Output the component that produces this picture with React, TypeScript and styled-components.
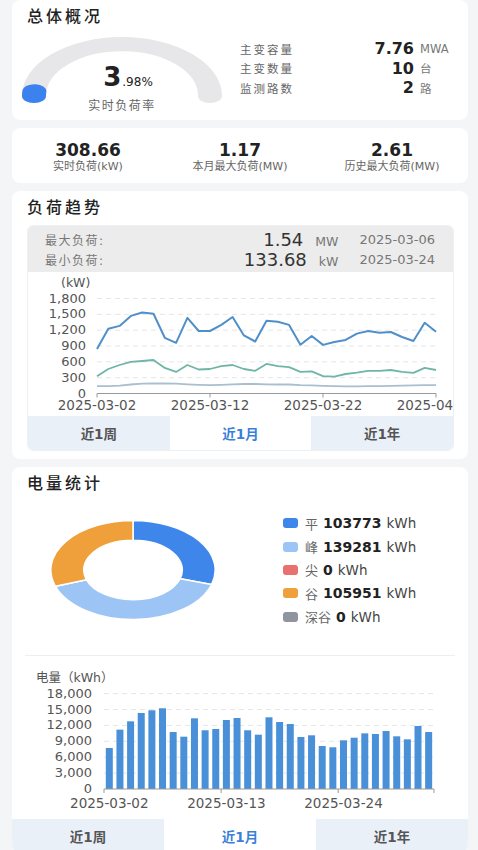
import React from 'react'
import styled, { createGlobalStyle } from 'styled-components'

const GlobalStyle = createGlobalStyle`
  body {
    margin: 0;
    background: #f4f5f7;
    font-family: 'DejaVu Sans', 'Noto Sans CJK SC', sans-serif;
    color: #222;
  }
`

const CJK = `'DejaVu Sans', 'Noto Sans CJK SC', sans-serif`

const loadTop = [845, 1225, 1280, 1470, 1535, 1510, 1055, 960, 1435, 1185, 1185, 1300, 1450, 1100, 985, 1380, 1360, 1300, 925, 1090, 920, 975, 1015, 1135, 1185, 1150, 1165, 1070, 995, 1340, 1170]
const loadMid = [325, 465, 540, 600, 615, 635, 485, 410, 540, 455, 465, 520, 540, 465, 430, 560, 520, 500, 410, 420, 330, 320, 370, 395, 430, 430, 445, 410, 390, 485, 445]
const loadLow = [140, 140, 150, 170, 185, 190, 190, 185, 175, 165, 160, 165, 175, 180, 180, 175, 170, 170, 160, 155, 145, 140, 135, 135, 140, 140, 145, 150, 155, 160, 160]

const energy = [7740, 11200, 12770, 14340, 14850, 15230, 10750, 9870, 13340, 11080, 11320, 13020, 13400, 11080, 10250, 13530, 12640, 12260, 9810, 10130, 8110, 7870, 9190, 9680, 10500, 10380, 10940, 9940, 9370, 11890, 10750]

const legend = [
  { name: '平', value: '103773', color: '#3f86ea', part: 103773 },
  { name: '峰', value: '139281', color: '#9cc5f5', part: 139281 },
  { name: '尖', value: '0', color: '#e8716f', part: 0 },
  { name: '谷', value: '105951', color: '#f0a03a', part: 105951 },
  { name: '深谷', value: '0', color: '#8e959f', part: 0 },
]

const Page = styled.div`
  padding: 0 10px 0 12px;
  display: flex;
  flex-direction: column;
  gap: 8px;
`

const Card = styled.section`
  background: #fff;
  border-radius: 8px;
  overflow: hidden;
`

const Title = styled.h2`
  margin: 0;
  padding: 6px 15px 0;
  height: 18px;
  line-height: 18px;
  font-family: 'Noto Sans CJK SC', sans-serif;
  font-size: 16px;
  font-weight: 500;
  letter-spacing: 3px;
  color: #222;
`

/* ---------- overview ---------- */

const GaugeRow = styled.div`
  display: flex;
  padding: 13px 0 17px 10px;
`

const GaugeWrap = styled.div`
  position: relative;
  width: 200px;
  height: 66px;
  flex: none;
`

const GaugeText = styled.div`
  position: absolute;
  left: 0;
  right: 0;
  top: 29px;
  text-align: center;
`

const GaugeValue = styled.div`
  line-height: 22px;
  font-size: 26px;
  font-weight: 700;
  color: #222;
  padding-left: 12px;
  small {
    font-size: 12px;
    font-weight: 400;
    margin-left: 1px;
  }
`

const GaugeLabel = styled.div`
  margin-top: 3px;
  font-family: ${CJK};
  font-size: 12px;
  letter-spacing: 1.5px;
  color: #666;
`

const InfoGrid = styled.div`
  flex: 1;
  align-self: flex-start;
  margin: 2px 8px 0 18px;
  display: grid;
  grid-template-columns: 1fr auto 40px;
  grid-auto-rows: 19.5px;
  column-gap: 6px;
  align-items: center;
`

const InfoLabel = styled.span`
  font-family: ${CJK};
  font-size: 11.5px;
  letter-spacing: 2px;
  color: #666;
`

const InfoValue = styled.span`
  font-size: 16px;
  font-weight: 700;
  color: #222;
  text-align: right;
`

const InfoUnit = styled.span`
  font-family: ${CJK};
  font-size: 11.5px;
  color: #777;
`

const StatsCard = styled(Card)`
  display: grid;
  grid-template-columns: repeat(3, 1fr);
  padding: 14px 0 10px;
`

const Stat = styled.div`
  text-align: center;
`

const StatValue = styled.div`
  font-size: 17px;
  font-weight: 700;
  line-height: 17px;
  color: #222;
`

const StatLabel = styled.div`
  margin-top: 1px;
  font-family: ${CJK};
  font-size: 11px;
  line-height: 13px;
  color: #666;
`

/* ---------- trend ---------- */

const TrendBody = styled.div`
  padding: 10px 14px 8px 15px;
`

const Panel = styled.div`
  border: 1px solid #eef0f3;
  border-radius: 6px;
  overflow: hidden;
`

const SummaryBox = styled.div`
  background: #ececec;
  padding: 3px 18px 3px 17px;
  display: grid;
  grid-template-columns: 1fr auto auto;
  grid-auto-rows: 20px;
  align-items: center;
`

const SumLabel = styled.span`
  font-family: ${CJK};
  font-size: 12px;
  letter-spacing: 1.5px;
  color: #777;
`

const SumValue = styled.span`
  font-size: 18px;
  color: #333;
  text-align: right;
  small {
    font-size: 12.5px;
    color: #777;
    margin-left: 12px;
  }
`

const SumDate = styled.span`
  margin-left: 21px;
  font-size: 13px;
  color: #777;
`

const ChartSvg = styled.svg`
  display: block;
  font-family: ${CJK};
  text {
    fill: #555;
  }
`

const Tabs = styled.div`
  display: grid;
  grid-template-columns: repeat(3, 1fr);
`

const Tab = styled.button<{ $active?: boolean }>`
  height: 34px;
  border: 0;
  padding: 0;
  font-family: ${CJK};
  font-size: 13.5px;
  font-weight: 700;
  background: ${({ $active }) => ($active ? '#fff' : '#e9f0f8')};
  color: ${({ $active }) => ($active ? '#3a7fd8' : '#555')};
`

/* ---------- energy ---------- */

const DonutRow = styled.div`
  display: flex;
  align-items: center;
  height: 158px;
`

const DonutBox = styled.div`
  width: 242px;
  display: flex;
  justify-content: center;
`

const LegendList = styled.ul`
  list-style: none;
  margin: 0 0 0 29px;
  padding: 0;
`

const LegendItem = styled.li`
  display: flex;
  align-items: center;
  height: 23.3px;
  font-size: 13.5px;
  color: #444;
`

const Swatch = styled.span<{ $color: string }>`
  width: 15px;
  height: 10px;
  border-radius: 3px;
  background: ${({ $color }) => $color};
  margin-right: 7px;
`

const LegendName = styled.span`
  font-family: 'Noto Sans CJK SC', sans-serif;
  font-size: 13px;
  color: #666;
  margin-right: 5px;
`

const LegendNum = styled.b`
  font-size: 14px;
  color: #222;
  margin-right: 5px;
`

const Divider = styled.hr`
  margin: 6px 13px 0;
  border: 0;
  border-top: 1px solid #eeeeee;
`

const BottomTabs = styled(Tabs)`
  margin-top: 6px;
`

const Gauge = () => (
  <svg width="200" height="66" viewBox="0 0 200 112" preserveAspectRatio="none">
    <path d="M12 100 A88 88 0 0 1 188 100" fill="none" stroke="#e7e7ea" strokeWidth="24" strokeLinecap="round" />
    <path d="M12 100 A88 88 0 0 1 12.4 92" fill="none" stroke="#3b82ee" strokeWidth="24" strokeLinecap="round" />
  </svg>
)

const LX0 = 69
const LSTEP = 11.3
const LY0 = 121.5
const ly = (v: number) => LY0 - (v / 1800) * 95
const pts = (arr: number[]) =>
  arr.map((v, i) => `${(LX0 + i * LSTEP).toFixed(1)},${ly(v).toFixed(1)}`).join(' ')

const LoadChart = () => (
  <ChartSvg width="426" height="144" viewBox="0 0 426 144">
    <text x="33" y="14.5" fontSize="12.5">(kW)</text>
    {[0, 300, 600, 900, 1200, 1500, 1800].map((v) => (
      <g key={v}>
        <text x="58" y={ly(v) + 4} fontSize="13" textAnchor="end">
          {v.toLocaleString('en-US')}
        </text>
        {v > 0 && <line x1={LX0} x2="408" y1={ly(v)} y2={ly(v)} stroke="#e6e6e6" strokeDasharray="5 4" />}
      </g>
    ))}
    <line x1={LX0} x2="408" y1={LY0} y2={LY0} stroke="#999" />
    {['2025-03-02', '2025-03-12', '2025-03-22', '2025-04-01'].map((d, i) => (
      <g key={d}>
        <line x1={LX0 + i * 113} x2={LX0 + i * 113} y1={LY0} y2={LY0 + 4} stroke="#999" />
        <text x={LX0 + i * 113} y="138" fontSize="13.5" textAnchor="middle">{d}</text>
      </g>
    ))}
    <polyline points={pts(loadLow)} fill="none" stroke="#a9bfcf" strokeWidth="1.8" strokeLinejoin="round" />
    <polyline points={pts(loadMid)} fill="none" stroke="#6fb6a6" strokeWidth="1.8" strokeLinejoin="round" />
    <polyline points={pts(loadTop)} fill="none" stroke="#4f8fca" strokeWidth="2" strokeLinejoin="round" />
  </ChartSvg>
)

const polar = (a: number, r: number) => {
  const rad = (a * Math.PI) / 180
  return `${(Math.sin(rad) * r).toFixed(2)} ${(-Math.cos(rad) * r).toFixed(2)}`
}

const segment = (a0: number, a1: number) => {
  const large = a1 - a0 > 180 ? 1 : 0
  return `M${polar(a0, 100)} A100 100 0 ${large} 1 ${polar(a1, 100)} L${polar(a1, 60)} A60 60 0 ${large} 0 ${polar(a0, 60)} Z`
}

const Donut = () => {
  const total = legend.reduce((s, l) => s + l.part, 0)
  let acc = 0
  return (
    <svg width="166" height="100" viewBox="-101 -101 202 202" preserveAspectRatio="none">
      {legend
        .filter((l) => l.part > 0)
        .map((l) => {
          const a0 = (acc / total) * 360
          acc += l.part
          const a1 = (acc / total) * 360
          return (
            <path
              key={l.name}
              d={segment(a0, a1)}
              fill={l.color}
              stroke="#fff"
              strokeWidth="1.5"
              vectorEffect="non-scaling-stroke"
            />
          )
        })}
    </svg>
  )
}

const BX0 = 92
const BSTEP = 10.645
const BY0 = 133
const by = (v: number) => BY0 - v * 0.0053

const EnergyChart = () => (
  <ChartSvg width="456" height="157" viewBox="0 0 456 157">
    <text x="24" y="25.5" fontSize="12.5">电量（kWh）</text>
    {[0, 3000, 6000, 9000, 12000, 15000, 18000].map((v) => (
      <g key={v}>
        <text x="80" y={by(v) + 4} fontSize="13" textAnchor="end">
          {v.toLocaleString('en-US')}
        </text>
        {v > 0 && <line x1={BX0} x2="422" y1={by(v)} y2={by(v)} stroke="#e6e6e6" strokeDasharray="5 4" />}
      </g>
    ))}
    {energy.map((v, i) => (
      <rect key={i} x={BX0 + i * BSTEP + 1.8} y={by(v)} width="7" height={BY0 - by(v)} fill="#4a90d9" />
    ))}
    <line x1={BX0} x2="422" y1={BY0} y2={BY0} stroke="#999" />
    {[0, 11, 22, 31].map((i) => (
      <line key={i} x1={BX0 + i * BSTEP} x2={BX0 + i * BSTEP} y1={BY0} y2={BY0 + 4} stroke="#999" />
    ))}
    {['2025-03-02', '2025-03-13', '2025-03-24'].map((d, k) => (
      <text key={d} x={BX0 + (k * 11 + 0.5) * BSTEP} y="152" fontSize="13.5" textAnchor="middle">{d}</text>
    ))}
  </ChartSvg>
)

const App: React.FC = () => {
  return (
    <>
      <GlobalStyle />
      <Page>
        <Card>
          <Title>总体概况</Title>
          <GaugeRow>
            <GaugeWrap>
              <Gauge />
              <GaugeText>
                <GaugeValue>
                  3<small>.98%</small>
                </GaugeValue>
                <GaugeLabel>实时负荷率</GaugeLabel>
              </GaugeText>
            </GaugeWrap>
            <InfoGrid>
              <InfoLabel>主变容量</InfoLabel>
              <InfoValue>7.76</InfoValue>
              <InfoUnit>MWA</InfoUnit>
              <InfoLabel>主变数量</InfoLabel>
              <InfoValue>10</InfoValue>
              <InfoUnit>台</InfoUnit>
              <InfoLabel>监测路数</InfoLabel>
              <InfoValue>2</InfoValue>
              <InfoUnit>路</InfoUnit>
            </InfoGrid>
          </GaugeRow>
        </Card>

        <StatsCard>
          <Stat>
            <StatValue>308.66</StatValue>
            <StatLabel>实时负荷(kW)</StatLabel>
          </Stat>
          <Stat>
            <StatValue>1.17</StatValue>
            <StatLabel>本月最大负荷(MW)</StatLabel>
          </Stat>
          <Stat>
            <StatValue>2.61</StatValue>
            <StatLabel>历史最大负荷(MW)</StatLabel>
          </Stat>
        </StatsCard>

        <Card>
          <Title>负荷趋势</Title>
          <TrendBody>
            <Panel>
              <SummaryBox>
                <SumLabel>最大负荷:</SumLabel>
                <SumValue>
                  1.54<small>MW</small>
                </SumValue>
                <SumDate>2025-03-06</SumDate>
                <SumLabel>最小负荷:</SumLabel>
                <SumValue>
                  133.68<small>kW</small>
                </SumValue>
                <SumDate>2025-03-24</SumDate>
              </SummaryBox>
              <LoadChart />
              <Tabs>
                <Tab>近1周</Tab>
                <Tab $active>近1月</Tab>
                <Tab>近1年</Tab>
              </Tabs>
            </Panel>
          </TrendBody>
        </Card>

        <Card>
          <Title>电量统计</Title>
          <DonutRow>
            <DonutBox>
              <Donut />
            </DonutBox>
            <LegendList>
              {legend.map((l) => (
                <LegendItem key={l.name}>
                  <Swatch $color={l.color} />
                  <LegendName>{l.name}</LegendName>
                  <LegendNum>{l.value}</LegendNum>
                  kWh
                </LegendItem>
              ))}
            </LegendList>
          </DonutRow>
          <Divider />
          <EnergyChart />
          <BottomTabs>
            <Tab>近1周</Tab>
            <Tab $active>近1月</Tab>
            <Tab>近1年</Tab>
          </BottomTabs>
        </Card>
      </Page>
    </>
  )
}

export default App
